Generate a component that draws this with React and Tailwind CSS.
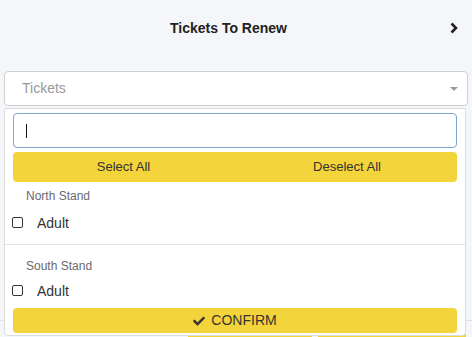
import React from "react";

function Chevron() {
  return (
    <svg width="8" height="12" viewBox="0 0 8 12" className="block">
      <polyline points="1.5,1.5 6,6 1.5,10.5" fill="none" stroke="#222" strokeWidth="2.6" strokeLinecap="butt" strokeLinejoin="miter" />
    </svg>
  );
}

function Caret() {
  return (
    <svg width="8" height="4" viewBox="0 0 8 4" className="block">
      <polygon points="0,0 8,0 4,4" fill="#999" />
    </svg>
  );
}

function CheckIcon() {
  return (
    <svg width="12" height="10" viewBox="0 0 512 420" className="block">
      <path
        fill="#333"
        d="M173.898 399.404l-166.4-166.4c-9.997-9.997-9.997-26.206 0-36.204l36.203-36.204c9.997-9.998 26.207-9.998 36.204 0L192 272.69 432.095 32.596c9.997-9.997 26.207-9.997 36.204 0l36.203 36.204c9.997 9.997 9.997 26.206 0 36.204l-294.4 294.401c-9.998 9.997-26.207 9.997-36.204-.001z"
      />
    </svg>
  );
}

function Box() {
  return <div className="w-[11px] h-[11px] border border-[#333] rounded-[2px] bg-white shrink-0 -mt-[2px]" />;
}

export default function App() {
  return (
    <div className="w-[472px] h-[337px] overflow-hidden bg-[#f5f6f9] font-['Liberation_Sans',Arial,sans-serif]">
      <div className="h-[56px] flex items-center pl-[7px] pr-[14px]">
        <div className="flex-1 text-center text-[14px] font-bold text-[#222]">Tickets To Renew</div>
        <Chevron />
      </div>
      <div className="mt-[15px] mx-[4px] h-[35px] border border-[#cfcfcf] rounded-[4px] bg-white flex items-center justify-between pl-[17px] pr-[9px]">
        <span className="text-[14px] text-[#999]">Tickets</span>
        <Caret />
      </div>
      <div className="relative">
        <div className="pt-[214px]">
          <div className="border-t border-[#e3e3e3]" />
          <div className="mt-[13px] flex pl-[188px] gap-[6px]">
            <div className="w-[124px] h-[10px] bg-[#f3d43a]" />
            <div className="w-[148px] h-[10px] bg-[#f3d43a]" />
          </div>
        </div>
        <div className="absolute left-[4px] top-[2px] w-[462px] h-[228px] bg-white border border-[#dcdcdc] rounded-b-[4px] px-[8px] pt-[4px] pb-[1px] flex flex-col">
          <div className="h-[35px] border border-[#7fa7d1] rounded-[4px] bg-white flex items-center pl-[12px]">
            <div className="w-px h-[14px] bg-[#111]" />
          </div>
          <div className="mt-[4px] h-[30px] bg-[#f3d43a] rounded-[4px] grid grid-cols-2 text-[13px] text-[#333]">
            <div className="flex items-center justify-center pr-[1px]">Select All</div>
            <div className="flex items-center justify-center pl-[2px]">Deselect All</div>
          </div>
          <div className="-mx-[8px] flex flex-col">
            <div className="mt-[7px] h-[14px] leading-[14px] pl-[21px] text-[12px] text-[#6a6a6a]">North Stand</div>
            <div className="mt-[10px] h-[20px] flex items-center pl-[7px] gap-[14px] text-[14px] text-[#333]">
              <Box />
              <span>Adult</span>
            </div>
            <div className="mt-[11px] border-t border-[#e3e3e3]" />
            <div className="mt-[14px] h-[14px] leading-[14px] pl-[21px] text-[12px] text-[#6a6a6a]">South Stand</div>
            <div className="mt-[8px] h-[20px] flex items-center pl-[7px] gap-[14px] text-[14px] text-[#333]">
              <Box />
              <span>Adult</span>
            </div>
          </div>
          <div className="mt-[7px] h-[25px] bg-[#f3d43a] rounded-[4px] flex items-center justify-center gap-[6px] text-[14px] text-[#333]">
            <CheckIcon />
            <span>CONFIRM</span>
          </div>
        </div>
      </div>
    </div>
  );
}
